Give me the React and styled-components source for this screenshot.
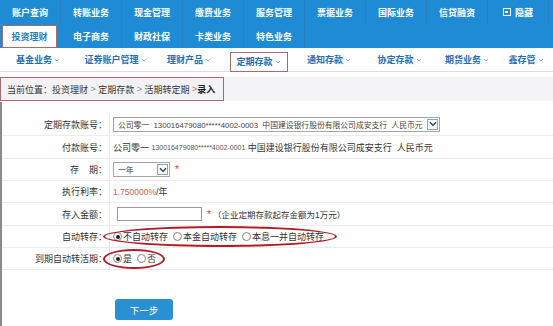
import React from "react";
import styled, { createGlobalStyle } from "styled-components";

const GlobalStyle = createGlobalStyle`
  body {
    margin: 0;
    background: #fff;
    font-family: "Liberation Sans", "Noto Sans CJK SC", sans-serif;
    font-size: 9px;
    color: #333;
  }
`;

const topRow1 = ["账户查询", "转账业务", "现金管理", "缴费业务", "服务管理", "票据业务", "国际业务", "信贷融资"];
const topRow2 = ["投资理财", "电子商务", "财政社保", "卡类业务", "特色业务"];
const subItems = [
  { t: "基金业务", w: 77 },
  { t: "证券账户管理", w: 78 },
  { t: "理财产品", w: 69 },
  { t: "定期存款", w: 70, marked: true },
  { t: "通知存款", w: 71 },
  { t: "协定存款", w: 70 },
  { t: "期货业务", w: 65 },
  { t: "鑫存管", w: 53 },
];

const Chevron = () => (
  <svg width="8" height="6" viewBox="0 0 8 6">
    <path d="M1 1.2 L4 4.4 L7 1.2" fill="none" stroke="#2a3a4a" strokeWidth="1.3" />
  </svg>
);

export default function App() {
  return (
    <>
      <GlobalStyle />
      <TopNav>
        <NavRow>
          {topRow1.map((t) => (
            <NavCell key={t}>{t}</NavCell>
          ))}
          <NavCell>
            <HideBox />
            隐藏
          </NavCell>
        </NavRow>
        <NavRow>
          {topRow2.map((t, i) => (
            <NavCell key={t} active={i === 0}>{t}</NavCell>
          ))}
        </NavRow>
      </TopNav>

      <SubNav>
        {subItems.map((s) => (
          <SubItem key={s.t} style={{ width: s.w }}>
            <SubLabel marked={s.marked}>
              {s.t}
              <Caret viewBox="0 0 8 8">
                <path d="M2 3.2 L4 5 L6 3.2" fill="none" stroke="#9aabbb" strokeWidth="1" />
              </Caret>
            </SubLabel>
          </SubItem>
        ))}
      </SubNav>

      <Breadcrumb>
        <CrumbBox>
          当前位置：投资理财 <Sep>&gt;</Sep> 定期存款 <Sep>&gt;</Sep> 活期转定期 <Sep>&gt;</Sep> <b>录入</b>
        </CrumbBox>
      </Breadcrumb>

      <Form>
        <Row h={23}>
          <Label>定期存款账号：</Label>
          <Value>
            <FakeSelect width={327}>
              <SelectText>
                公司零一&nbsp;&nbsp;130016479080*****4002-0003&nbsp;&nbsp;中国建设银行股份有限公司成安支行&nbsp;&nbsp;人民币元
              </SelectText>
              <Arrow>
                <Chevron />
              </Arrow>
            </FakeSelect>
          </Value>
        </Row>
        <Row h={23}>
          <Label>付款账号：</Label>
          <Value>
            公司零一&nbsp;<Mono>130016479080*****4002-0001</Mono>&nbsp;中国建设银行股份有限公司成安支行&nbsp;&nbsp;人民币元
          </Value>
        </Row>
        <Row h={22}>
          <Label>存&nbsp;&nbsp;&nbsp;&nbsp;期：</Label>
          <Value>
            <FakeSelect width={57}>
              <SelectText>一年</SelectText>
              <Arrow>
                <Chevron />
              </Arrow>
            </FakeSelect>
            <Star>*</Star>
          </Value>
        </Row>
        <Row h={22}>
          <Label>执行利率：</Label>
          <Value>
            <Rate>1.750000%</Rate>/年
          </Value>
        </Row>
        <Row h={23}>
          <Label>存入金额：</Label>
          <Value>
            <TextInput />
            <Star>*</Star>
            <Note>（企业定期存款起存金额为1万元）</Note>
          </Value>
        </Row>
        <Row h={22}>
          <Label>自动转存：</Label>
          <Value>
            <Radio checked>不自动转存</Radio>
            <Radio>本金自动转存</Radio>
            <Radio>本息一并自动转存</Radio>
          </Value>
          <Ellipse style={{ left: 101, top: 0, width: 234, height: 21 }} />
        </Row>
        <Row h={22}>
          <Label>到期自动转活期：</Label>
          <Value>
            <Radio checked>是</Radio>
            <Radio>否</Radio>
          </Value>
          <Ellipse style={{ left: 101, top: 1, width: 62, height: 20 }} />
        </Row>
        <ButtonBar>
          <NextButton>下一步</NextButton>
        </ButtonBar>
      </Form>
    </>
  );
}

function Radio({ checked, children }) {
  return (
    <RadioItem>
      <RadioDot checked={checked} />
      {children}
    </RadioItem>
  );
}

const TopNav = styled.div`
  background: #1f8bd4;
  height: 48px;
`;

const NavRow = styled.div`
  display: flex;
  height: 24px;
`;

const NavCell = styled.div`
  width: 61px;
  display: flex;
  align-items: center;
  justify-content: center;
  gap: 4px;
  font-weight: bold;
  font-size: 9px;
  color: ${(p) => (p.active ? "#2a7fc4" : "#fff")};
  background: ${(p) => (p.active ? "#fff" : "transparent")};
  border-right: 1px solid ${(p) => (p.active ? "transparent" : "#2a7fbf")};
  box-sizing: border-box;
  ${(p) =>
    p.active &&
    `
    width: 55px;
    margin: 1px 4px 0 2px;
    border: 1px solid #a86b6b;
  `}
`;

const HideBox = styled.span`
  width: 8px;
  height: 8px;
  border: 1.5px solid #fff;
  box-sizing: border-box;
  display: inline-block;
  position: relative;
  &::after {
    content: "";
    position: absolute;
    left: 1px;
    top: 1.5px;
    width: 3px;
    height: 2px;
    background: #fff;
  }
`;

const SubNav = styled.div`
  display: flex;
  height: 24px;
  border-bottom: 1px solid #ddd;
  box-sizing: border-box;
  background: #fff;
`;

const SubItem = styled.div`
  display: flex;
  align-items: center;
  justify-content: center;
`;

const SubLabel = styled.span`
  display: flex;
  align-items: center;
  justify-content: center;
  font-weight: bold;
  font-size: 9px;
  color: #1e6fb5;
  ${(p) =>
    p.marked &&
    `
    border: 1px solid #a86b6b;
    width: 58px;
    height: 20px;
    margin-top: 4px;
    box-sizing: border-box;
  `}
`;

const Caret = styled.svg`
  width: 8px;
  height: 8px;
  margin-left: 1px;
`;

const Breadcrumb = styled.div`
  margin-top: 5px;
  height: 24px;
  background: #f3f3f5;
`;

const CrumbBox = styled.div`
  width: 224px;
  height: 24px;
  box-sizing: border-box;
  border: 1px solid #a86b6b;
  display: flex;
  align-items: center;
  white-space: pre;
  padding-left: 6px;
  font-size: 9px;
  color: #333;
  b {
    font-weight: bold;
    color: #222;
  }
`;

const Sep = styled.span`
  color: #888;
`;

const Form = styled.div`
  border-left: 2px solid #8a8a8a;
  margin-top: 1px;
  padding-top: 11px;
  min-height: 224px;
  box-sizing: border-box;
`;

const Row = styled.div`
  position: relative;
  display: grid;
  grid-template-columns: 108px 1fr;
  height: ${(p) => p.h}px;
  border-bottom: 1px solid #ececec;
  box-sizing: border-box;
`;

const Label = styled.div`
  display: flex;
  align-items: center;
  justify-content: flex-end;
  padding-right: 2px;
  border-right: 1px solid #e6e6e6;
  font-size: 9px;
  color: #333;
  white-space: pre;
`;

const Value = styled.div`
  display: flex;
  align-items: center;
  padding-left: 3px;
  font-size: 9px;
  color: #333;
  white-space: pre;
`;

const Mono = styled.span`
  font-size: 7px;
  color: #555;
`;

const FakeSelect = styled.div`
  width: ${(p) => p.width}px;
  height: 15px;
  border: 1px solid #a5a5a5;
  box-sizing: border-box;
  display: flex;
  align-items: center;
  justify-content: space-between;
  background: #fff;
`;

const SelectText = styled.span`
  font-size: 7.8px;
  color: #444;
  padding-left: 4px;
  overflow: hidden;
  white-space: pre;
`;

const Arrow = styled.span`
  flex: none;
  width: 11px;
  height: 11px;
  border: 1px solid #8aa;
  box-sizing: border-box;
  margin-right: 1px;
  display: flex;
  align-items: center;
  justify-content: center;
  background: #f4f6f8;
`;

const Star = styled.span`
  color: #d8343a;
  margin-left: 5px;
  font-size: 10px;
`;

const Rate = styled.span`
  color: #c0674a;
  font-size: 8.5px;
`;

const TextInput = styled.span`
  display: inline-block;
  width: 83px;
  height: 12px;
  border: 1px solid #999;
  margin-left: 4px;
  background: #fff;
`;

const Note = styled.span`
  margin-left: 2px;
  font-size: 8.5px;
`;

const RadioItem = styled.span`
  display: inline-flex;
  align-items: center;
  margin-right: 5px;
  font-size: 9px;
  color: #333;
`;

const RadioDot = styled.span`
  width: 7px;
  height: 7px;
  border-radius: 50%;
  border: 1px solid #888;
  margin: 0 1px 0 0;
  position: relative;
  background: #fff;
  &::after {
    content: "";
    display: ${(p) => (p.checked ? "block" : "none")};
    position: absolute;
    left: 1.5px;
    top: 1.5px;
    width: 4px;
    height: 4px;
    border-radius: 50%;
    background: #222;
  }
`;

const Ellipse = styled.span`
  position: absolute;
  border: 2px solid #b01d2a;
  border-radius: 50%;
  box-sizing: border-box;
  pointer-events: none;
`;

const ButtonBar = styled.div`
  padding: 29px 0 0 113px;
`;

const NextButton = styled.button`
  width: 58px;
  height: 21px;
  border: none;
  border-radius: 3px;
  background: #2b8fd3;
  color: #fff;
  font-family: "Liberation Sans", "Noto Sans CJK SC", sans-serif;
  font-size: 9.5px;
  padding: 0;
`;
